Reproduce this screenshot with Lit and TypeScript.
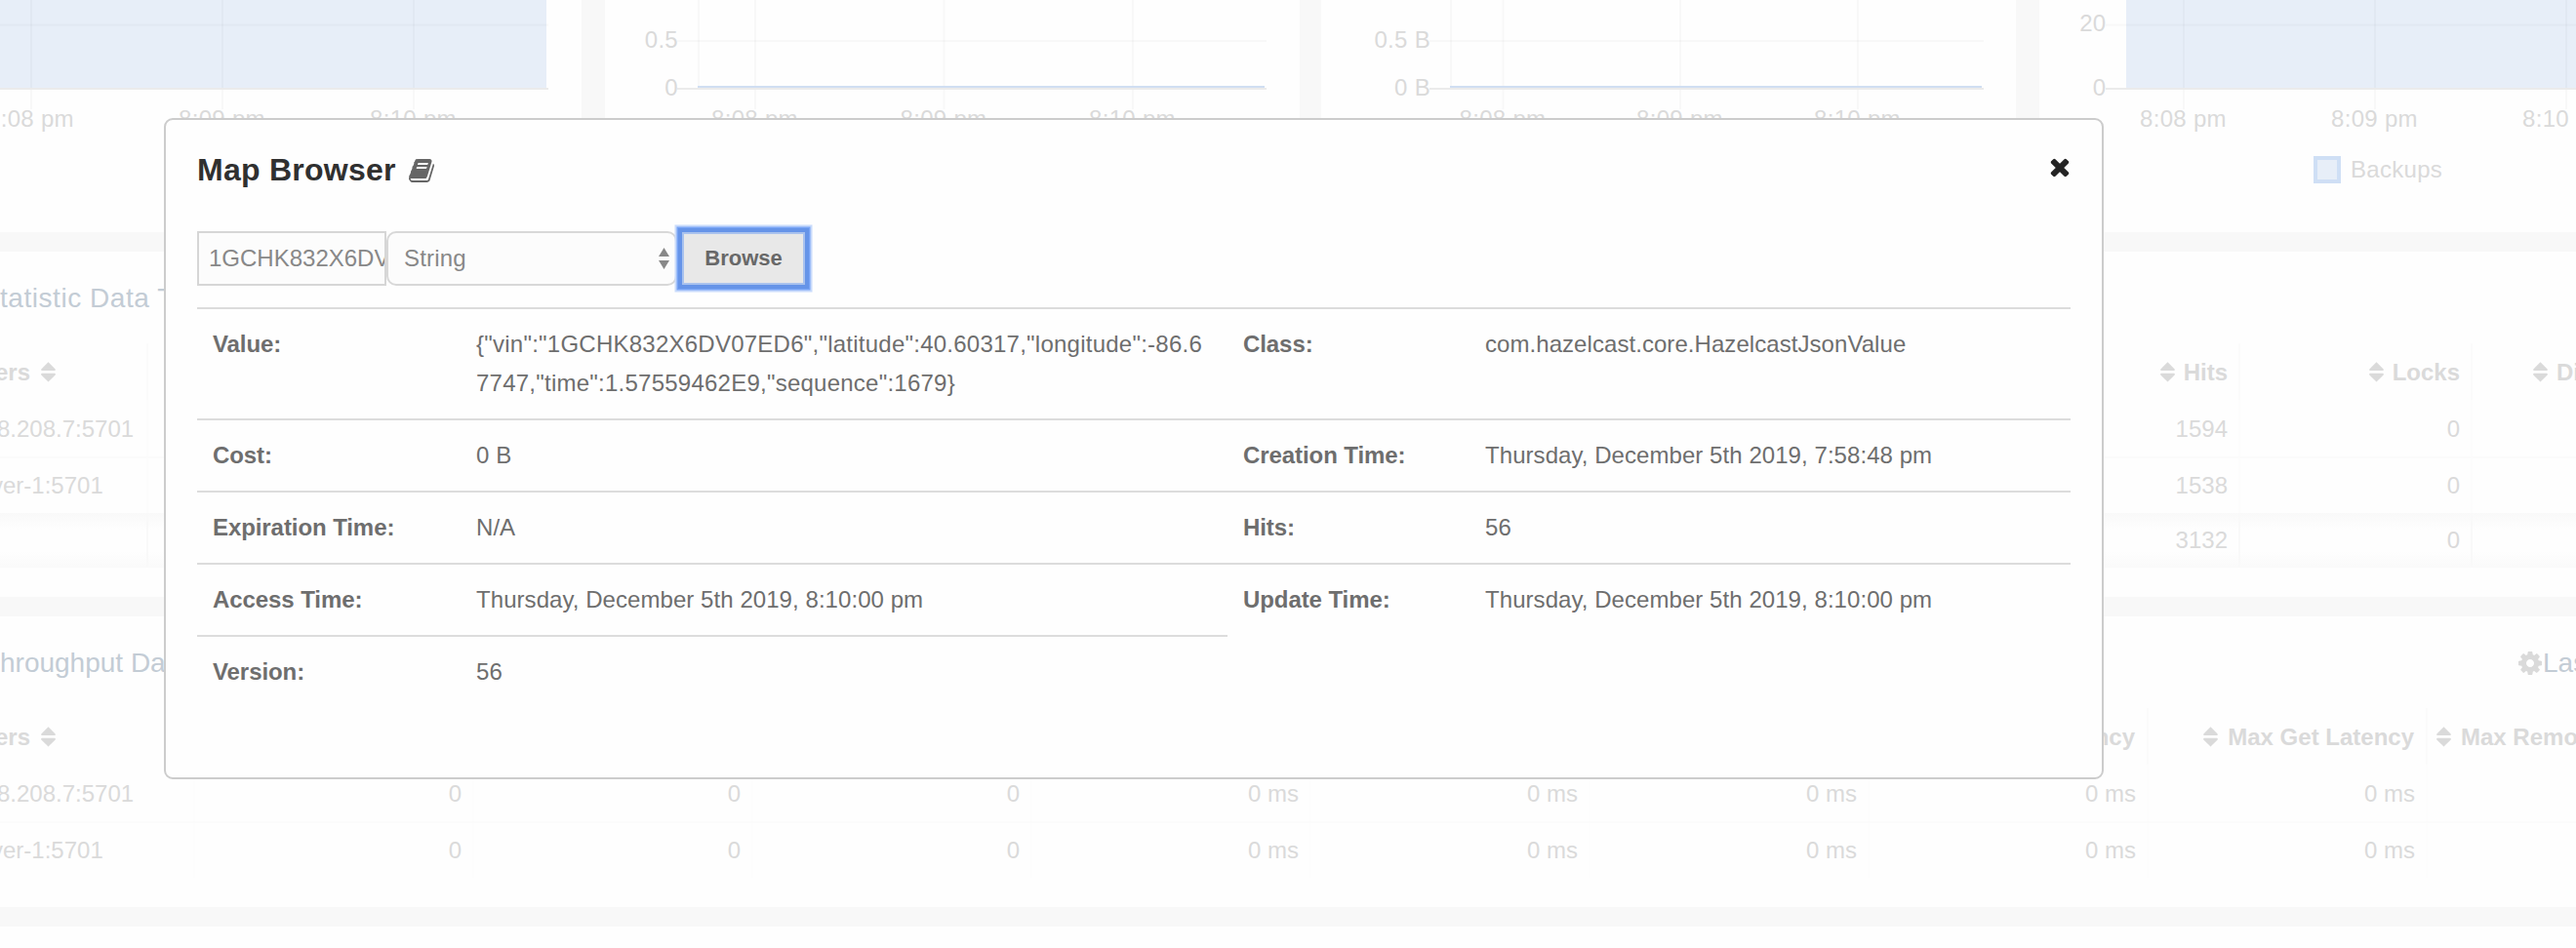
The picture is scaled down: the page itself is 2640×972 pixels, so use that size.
import { LitElement, html, svg, css, nothing } from "lit";
import { customElement, property } from "lit/decorators.js";

const BOOK =
  "M1639 478q40 57 18 129l-275 906q-19 64-76.5 107.5t-122.5 43.5h-923q-77 0-148.5-53.5t-99.5-131.5q-24-67-2-127 0-4 3-27t4-37q1-8-3-21.5t-3-19.5q2-11 8-21t16.5-23.5 16.5-23.5q23-38 45-91.5t30-91.5q3-10 .5-30t-.5-28q3-11 17-28t17-23q21-36 42-92t25-90q1-9-2.5-32t.5-28q4-13 22-30.5t22-22.5q19-26 42.5-84.5t27.5-96.5q1-8-3-25.5t-2-26.5q2-8 9-18t18-23 17-21q8-12 16.5-30.5t15-35 16-36 19.5-32 26.5-23.5 36-11.5 47.5 5.5l-1 3q38-9 51-9h761q74 0 114 56t18 130l-274 906q-36 119-71.5 153.5t-128.5 34.5h-869q-27 0-38 15-11 16-1 43 24 70 144 70h923q29 0 56-15.5t35-41.5l300-987q7-22 5-57 38 15 59 43zm-1064 2q-4 13 2 22.5t20 9.5h608q13 0 25.5-9.5t16.5-22.5l21-64q4-13-2-22.5t-20-9.5h-608q-13 0-25.5 9.5t-16.5 22.5zm-83 256q-4 13 2 22.5t20 9.5h608q13 0 25.5-9.5t16.5-22.5l21-64q4-13-2-22.5t-20-9.5h-608q-13 0-25.5 9.5t-16.5 22.5z";
const TIMES =
  "M1490 1322q0 40-28 68l-136 136q-28 28-68 28t-68-28l-294-294-294 294q-28 28-68 28t-68-28l-136-136q-28-28-28-68t28-68l294-294-294-294q-28-28-28-68t28-68l136-136q28-28 68-28t68 28l294 294 294-294q28-28 68-28t68 28l136 136q28 28 28 68t-28 68l-294 294 294 294q28 28 28 68z";
const COG =
  "M1152 896q0-106-75-181t-181-75-181 75-75 181 75 181 181 75 181-75 75-181zm512-109v222q0 12-8 23t-20 13l-185 28q-19 54-39 91 35 50 107 138 10 12 10 25t-9 23q-27 37-99 108t-94 71q-12 0-26-9l-138-108q-44 23-91 38-16 136-29 186-7 28-36 28h-222q-14 0-24.5-8.5t-11.5-21.5l-28-184q-49-16-90-37l-141 107q-10 9-25 9-14 0-25-11-126-114-165-168-7-10-7-23 0-12 8-23 15-21 51-66.5t54-70.5q-27-50-41-99l-183-27q-13-2-21-12.5t-8-23.5v-222q0-12 8-23t19-13l186-28q14-46 39-92-40-57-107-138-10-12-10-24 0-10 9-23 26-36 98.5-107.5t94.5-71.5q13 0 26 10l138 107q44-23 91-38 16-136 29-186 7-28 36-28h222q14 0 24.5 8.5t11.5 21.5l28 184q49 16 90 37l142-107q9-9 24-9 13 0 25 10 129 119 165 170 7 8 7 22 0 12-8 23-15 21-51 66.5t-54 70.5q26 50 41 98l183 28q13 2 21 12.5t8 23.5z";

interface ChartSpec {
  width: number;
  left: number;
  right: number;
  axisFrom: number;
  axisTo: number;
  labelEnd?: number;
  area: boolean;
  gridY: number;
  yLabels: [string, number][];
  xLabels: [string, number][];
  legend?: boolean;
}

const CHARTS: ChartSpec[] = [
  {
    width: 596, left: -2, right: 560, axisFrom: 0, axisTo: 562, area: true, gridY: 25.5,
    yLabels: [], xLabels: [["8:08 pm", 32], ["8:09 pm", 228], ["8:10 pm", 424]],
  },
  {
    width: 712, left: 96, right: 676, axisFrom: 74, axisTo: 678, labelEnd: 75, area: false, gridY: 42,
    yLabels: [["0.5", 48.7], ["0", 97.7]],
    xLabels: [["8:08 pm", 154], ["8:09 pm", 347.5], ["8:10 pm", 541]],
  },
  {
    width: 712, left: 133, right: 677, axisFrom: 111, axisTo: 679, labelEnd: 112, area: false, gridY: 42,
    yLabels: [["0.5 B", 48.7], ["0 B", 97.7]],
    xLabels: [["8:08 pm", 186.5], ["8:09 pm", 368], ["8:10 pm", 550]],
  },
  {
    width: 550, left: 89, right: 552, axisFrom: 68, axisTo: 550, labelEnd: 68.5, area: true, gridY: 25.5,
    yLabels: [["20", 32], ["0", 97.7]],
    xLabels: [["8:08 pm", 148], ["8:09 pm", 344], ["8:10 pm", 540]],
    legend: true,
  },
];

@customElement("line-chart")
class LineChart extends LitElement {
  @property({ attribute: false }) spec!: ChartSpec;

  static styles = css`
    :host { display: block; flex: none; height: 238px; background: #fefefe; overflow: hidden; }
    svg { display: block; font: 24px "Liberation Sans", Arial, sans-serif; letter-spacing: 0.3px; }
    .label { fill: #dadada; }
    .grid { stroke: #000; stroke-opacity: 0.022; stroke-width: 2; }
    .axis { stroke: #ebebeb; stroke-width: 2; }
    .series { stroke: #d0def2; stroke-width: 2; }
    .fill { fill: #e7eef8; }
    .swatch { fill: #e7eef8; stroke: #cfdff5; stroke-width: 4; }
  `;

  render() {
    const s = this.spec;
    return html`<svg width=${s.width} height="238" viewBox="0 0 ${s.width} 238">
      ${s.area
        ? svg`<rect class="fill" x=${s.left} y="-2" width=${s.right - s.left} height="93"></rect>`
        : svg`<line class="grid" x1=${s.left} x2=${s.left} y1="0" y2="90"></line>`}
      <line class="grid" x1=${s.axisFrom} x2=${s.axisTo} y1=${s.gridY} y2=${s.gridY}></line>
      ${s.xLabels.map(([, x]) => svg`<line class="grid" x1=${x} x2=${x} y1="0" y2="112"></line>`)}
      <line class="axis" x1=${s.axisFrom} x2=${s.axisTo} y1="91" y2="91"></line>
      ${s.area ? nothing : svg`<line class="series" x1=${s.left - 1} x2=${s.right} y1="89" y2="89"></line>`}
      ${s.yLabels.map(([t, y]) => svg`<text class="label" text-anchor="end" x=${s.labelEnd} y=${y}>${t}</text>`)}
      ${s.xLabels.map(([t, x]) => svg`<text class="label" text-anchor="middle" x=${x - 0.5} y="129.7">${t}</text>`)}
      ${s.legend
        ? svg`<rect class="swatch" x="283" y="162" width="24" height="24"></rect>
            <text class="label" x="319" y="182">Backups</text>`
        : nothing}
    </svg>`;
  }
}

const sortIcon = html`<svg class="sort" width="15" height="21" viewBox="0 0 15 21">
  <path d="M7.5 0.3 L14.7 7.4 Q15.3 9 13.9 9 H1.1 Q-0.3 9 0.3 7.4 Z M7.5 20.5 L14.7 13.4 Q15.3 11.8 13.9 11.8 H1.1 Q-0.3 11.8 0.3 13.4 Z"></path>
</svg>`;

@customElement("map-dialog")
class MapDialog extends LitElement {
  static styles = css`
    :host {
      display: flex; flex-direction: column; box-sizing: border-box;
      border: 2px solid #ccc; border-radius: 9px; background: #fefefe;
      padding: 31px 32px 0; color: #6e6e6e;
      font: 24px/40px "Liberation Sans", Arial, sans-serif;
    }
    .head { display: flex; height: 40px; justify-content: space-between; }
    .title { display: flex; gap: 13px; margin: 0; font-size: 32px; line-height: 40px; font-weight: bold; letter-spacing: 0.25px; color: #303030; }
    .book { fill: #666; margin-top: 7px; }
    .close { fill: #242424; margin-top: 3px; margin-right: -3px; }
    .form { display: flex; height: 56px; margin-top: 43px; line-height: 52px; color: #888; }
    .key { box-sizing: border-box; width: 194px; border: 2px solid #d6d6d6; background: #fcfcfc; padding-left: 10px; overflow: hidden; white-space: nowrap; }
    .type {
      box-sizing: border-box; width: 298px; border: 2px solid #d8d8d8; border-radius: 10px; background: #fcfcfc;
      padding: 0 6px 0 16px; display: flex; justify-content: space-between; align-items: center; letter-spacing: 0.2px;
    }
    .type svg { fill: #888; }
    .browse {
      margin: 3px 0 3px 7px; width: 122px; height: 50px; line-height: 50px; text-align: center;
      background: #e8e8e8; color: #686868; font-weight: bold; font-size: 22px;
      box-shadow: 0 0 0 2px #a9c2ee, 0 0 0 6px #6694e8, 0 0 0 7.5px #78a4f6, 0 0 0 9.5px #c9dbfb;
    }
    .facts { display: grid; grid-template-columns: 1056px 864px; margin-top: 22px; }
    .fact { display: grid; grid-template-columns: 285px 1fr; min-height: 40px; padding: 16px 0; border-top: 2px solid #dcdcdc; }
    .right { grid-template-columns: 263px 1fr; }
    .name { padding-left: 16px; font-weight: bold; letter-spacing: -0.08px; }
    .value { padding-right: 18px; padding-left: 1px; word-break: break-all; letter-spacing: 0.24px; }
    .plain { word-break: normal; letter-spacing: 0.06px; }
  `;

  private facts: [string, string][] = [
    ["Value:", '{"vin":"1GCHK832X6DV07ED6","latitude":40.60317,"longitude":-86.67747,"time":1.57559462E9,"sequence":1679}'],
    ["Class:", "com.hazelcast.core.HazelcastJsonValue"],
    ["Cost:", "0 B"],
    ["Creation Time:", "Thursday, December 5th 2019, 7:58:48 pm"],
    ["Expiration Time:", "N/A"],
    ["Hits:", "56"],
    ["Access Time:", "Thursday, December 5th 2019, 8:10:00 pm"],
    ["Update Time:", "Thursday, December 5th 2019, 8:10:00 pm"],
    ["Version:", "56"],
  ];

  render() {
    return html`
      <div class="head">
        <h2 class="title">Map Browser
          <svg class="book" width="28" height="28" viewBox="0 0 1792 1792"><path d=${BOOK}></path></svg>
        </h2>
        <svg class="close" width="28" height="28" viewBox="0 0 1792 1792"><path d=${TIMES}></path></svg>
      </div>
      <div class="form">
        <div class="key">1GCHK832X6DV</div>
        <div class="type">String
          <svg width="11" height="22" viewBox="0 0 11 22"><path d="M5.5 0 L11 9 H0 Z M5.5 22 L11 13 H0 Z"></path></svg>
        </div>
        <div class="browse">Browse</div>
      </div>
      <div class="facts">
        ${this.facts.map(
          ([n, v], i) => html`<div class="fact ${i % 2 ? "right" : ""}">
            <div class="name">${n}</div><div class="value ${i ? "plain" : ""}">${v}</div>
          </div>`,
        )}
      </div>`;
  }
}

@customElement("app-root")
class AppRoot extends LitElement {
  static styles = css`
    :host {
      display: block; position: relative; width: 2640px; height: 972px; overflow: hidden;
      background: #f8f8f8; color: #dadada; font: 24px/40px "Liberation Sans", Arial, sans-serif;
    }
    .page { display: flex; flex-direction: column; gap: 20px; }
    .charts { display: flex; gap: 24px; }
    .charts > :nth-child(3) { margin-left: -2px; }
    .card { background: #fefefe; padding-top: 28px; box-sizing: border-box; white-space: nowrap; overflow: hidden; }
    .stats { height: 354px; }
    .throughput { height: 298px; }
    .rest { height: 22px; }
    .bar { display: flex; justify-content: space-between; height: 40px; margin-bottom: 26px; font-size: 28px; color: #c3ccd5; }
    .wide { letter-spacing: 0.55px; }
    .settings { display: flex; align-items: center; width: 59px; }
    .cog { flex: none; fill: #dadada; margin-right: 1px; }
    .row { display: grid; height: 58px; box-sizing: border-box; }
    .stats .row { grid-template-columns: 152px 1906px 238px 238px 330px; }
    .throughput .row { grid-template-columns: 200px repeat(9, 286px); }
    .line { border-top: 2px solid #fbfbfb; }
    .line .cell { padding-top: 8px; }
    .cell { box-sizing: border-box; padding: 10px 11px 0 0; border-right: 2px solid #fcfcfc; text-align: right; }
    .throughput .cell { border-color: #fdfdfd; }
    .headrow { font-weight: bold; }
    .headrow .cell { display: flex; justify-content: flex-end; align-items: flex-start; gap: 9px; border-color: #fbfbfb; }
    .throughput .headrow .cell { padding-right: 12px; gap: 10px; }
    .headrow .cell.first { text-align: left; justify-content: flex-start; padding-right: 0; gap: 11px; }
    .cell.first { text-align: left; padding-right: 0; }
    .headrow .cell.tail { justify-content: flex-start; padding-left: 62px; border: 0; }
    .throughput .headrow .cell.tail { padding-left: 9px; }
    .sort { flex: none; fill: #dadada; margin-top: 9px; }
    .total { height: 56px; background: linear-gradient(#f9f9f9, #fefefe 30%, #fefefe 70%, #fafafa); }
    .total .cell { padding-top: 8px; border-color: #f9f9f9; }
    .pull3 { margin-left: -3px; }
    .pull5 { margin-left: -5px; }
    .pull9 { margin-left: -9px; }
    .dialog { position: absolute; left: 168px; top: 121px; width: 1988px; height: 678px; }
  `;

  private statRow(cls: string, first: unknown, hits: string, locks: string) {
    return html`<div class="row ${cls}">
      <div class="cell first">${first}</div><div class="cell"></div>
      <div class="cell">${hits}</div><div class="cell">${locks}</div><div class="cell tail"></div>
    </div>`;
  }

  private rateRow(cls: string, first: unknown) {
    return html`<div class="row ${cls}">
      <div class="cell first">${first}</div>
      ${["0", "0", "0", "0 ms", "0 ms", "0 ms", "0 ms", "0 ms", ""].map((v) => html`<div class="cell">${v}</div>`)}
    </div>`;
  }

  render() {
    const a = html`<span class="pull3">8.208.7:5701</span>`;
    const b = html`<span class="pull9">ver-1:5701</span>`;
    return html`
      <div class="page">
        <div class="charts">${CHARTS.map((c) => html`<line-chart .spec=${c}></line-chart>`)}</div>
        <div class="card stats">
          <div class="bar"><span class="wide">tatistic Data T</span></div>
          <div class="row headrow">
            <div class="cell first"><span class="pull5">ers</span>${sortIcon}</div>
            <div class="cell"></div>
            <div class="cell">${sortIcon}Hits</div>
            <div class="cell">${sortIcon}Locks</div>
            <div class="cell tail">${sortIcon}Di</div>
          </div>
          ${this.statRow("", a, "1594", "0")}
          ${this.statRow("line", b, "1538", "0")}
          ${this.statRow("total", "", "3132", "0")}
        </div>
        <div class="card throughput">
          <div class="bar">
            <span>hroughput Da</span>
            <span class="settings">
              <svg class="cog" width="24" height="24" viewBox="128 128 1536 1536"><path d=${COG}></path></svg>Las
            </span>
          </div>
          <div class="row headrow">
            <div class="cell first"><span class="pull5">ers</span>${sortIcon}</div>
            ${[0, 1, 2, 3, 4, 5].map(() => html`<div class="cell"></div>`)}
            <div class="cell">ncy</div>
            <div class="cell">${sortIcon}Max Get Latency</div>
            <div class="cell tail">${sortIcon}Max Remo</div>
          </div>
          ${this.rateRow("", a)} ${this.rateRow("line", b)}
        </div>
        <div class="card rest"></div>
      </div>
      <map-dialog class="dialog"></map-dialog>`;
  }
}
